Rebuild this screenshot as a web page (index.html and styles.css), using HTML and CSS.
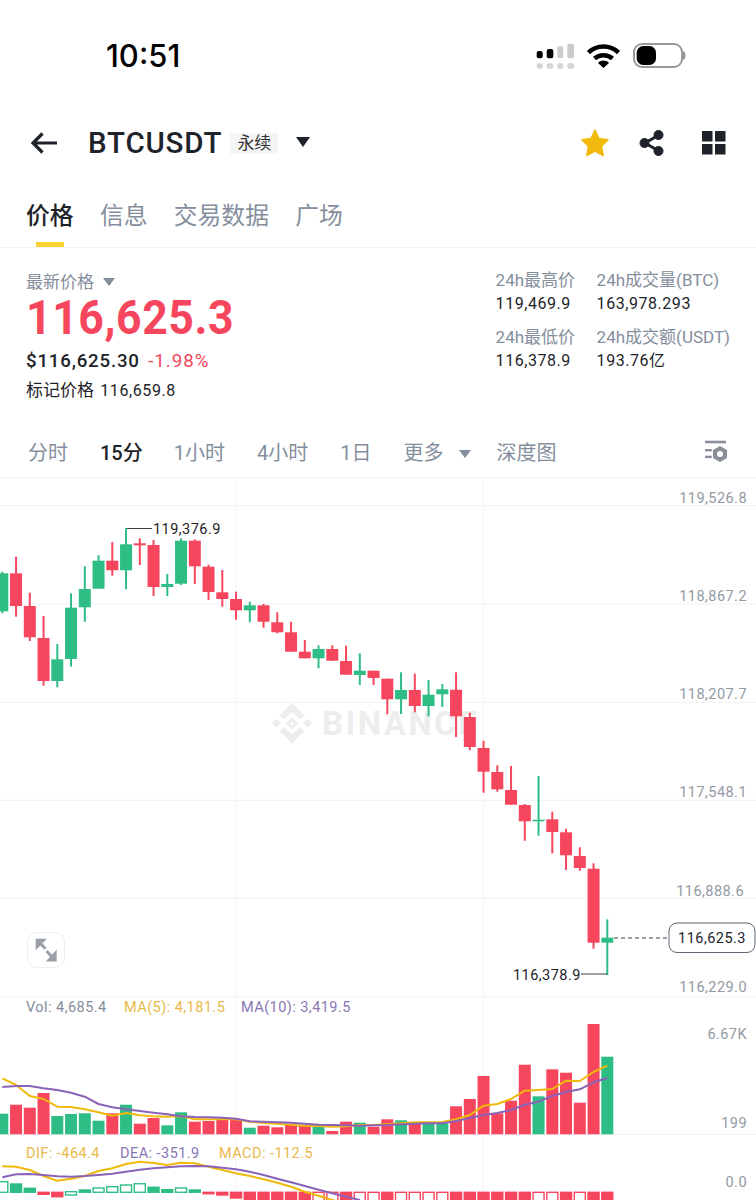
FILE: index.html
```html
<!DOCTYPE html>
<html lang="zh-CN">
<head>
    <meta charset="UTF-8">
    <meta name="viewport" content="width=device-width, initial-scale=1.0">
    <title>BTCUSDT 永续</title>
    <link rel="stylesheet" href="styles.css">
</head>
<body>
    <!-- Status bar -->
    <div class="status-bar">
        <span class="clock">10:51</span>
        <div class="status-icons">
            <svg width="38" height="26" viewBox="0 0 38 26">
                <rect x="0.700" y="8" width="6" height="7.300" rx="2" fill="#000"/>
                <rect x="10.700" y="6" width="6.600" height="9.300" rx="2" fill="#000"/>
                <rect x="21.300" y="3.300" width="6" height="12" rx="2" fill="#ccc"/>
                <rect x="31.300" y="0.700" width="6.700" height="14.600" rx="2" fill="#ccc"/>
                <rect x="0.700" y="20.300" width="6" height="5.400" rx="2" fill="#d4d4d4"/>
                <rect x="10.700" y="20.300" width="6.600" height="5.400" rx="2" fill="#d4d4d4"/>
                <rect x="21.300" y="20.300" width="6" height="5.400" rx="2" fill="#d4d4d4"/>
                <rect x="31.300" y="20.300" width="6.700" height="5.400" rx="2" fill="#d4d4d4"/>
            </svg>
            <svg width="33" height="24" viewBox="0 0 33 24" fill="none" stroke="#000" stroke-width="4.500">
                <path d="M1.500 8.500C10 0.500 23 0.500 31.500 8.500"/>
                <path d="M7.500 14.500C12.500 10 20.500 10 25.500 14.500"/>
                <path d="M11 19L16.500 24L22 19C19 15.800 14 15.800 11 19Z" fill="#000" stroke="none"/>
            </svg>
            <svg width="54" height="25" viewBox="0 0 54 25">
                <rect x="1" y="1" width="48" height="23" rx="8" fill="#fff" stroke="#999" stroke-width="2"/>
                <rect x="3.700" y="3" width="19.300" height="19" rx="6.500" fill="#000"/>
                <path d="M50 8C53.500 8.500 53.500 16.500 50 17Z" fill="#999"/>
            </svg>
        </div>
    </div>

    <!-- Title row -->
    <header class="title-bar">
        <svg class="back" width="28" height="24" viewBox="0 0 28 24" fill="none" stroke="#1e2329" stroke-width="3.200">
            <path d="M27 12H3M12.500 2.500L3 12L12.500 21.500"/>
        </svg>
        <h1 class="symbol">BTCUSDT</h1>
        <span class="tag">永续</span>
        <span class="caret caret-dark"></span>
        <div class="actions">
            <svg width="28" height="28" viewBox="0 0 28 28">
                <path d="M14 1L18 9.500L27 10.700L20.500 17.200L22.200 26.500L14 22L5.800 26.500L7.500 17.200L1 10.700L10 9.500Z" fill="#f0b90b" stroke="#f0b90b" stroke-linejoin="round" stroke-width="1.500"/>
            </svg>
            <svg class="share" width="28" height="28" viewBox="0 0 28 28" fill="#1e2329" stroke="#1e2329">
                <path d="M20 6.500L7 14L20 21.500" fill="none" stroke-width="3"/>
                <circle cx="20.500" cy="6" r="4.500"/>
                <circle cx="6.500" cy="14" r="4.500"/>
                <circle cx="20.500" cy="22" r="4.500"/>
            </svg>
            <svg width="24" height="24" viewBox="0 0 24 24" fill="#1e2329">
                <rect x="0" y="0" width="10.500" height="10.500"/>
                <rect x="13" y="0" width="10.500" height="10.500"/>
                <rect x="0" y="13" width="10.500" height="10.500"/>
                <rect x="13" y="13" width="10.500" height="10.500"/>
            </svg>
        </div>
    </header>

    <!-- Page tabs -->
    <nav class="tabs">
        <a class="tab active">价格</a>
        <a class="tab">信息</a>
        <a class="tab">交易数据</a>
        <a class="tab">广场</a>
    </nav>

    <!-- Price summary -->
    <section class="summary">
        <div class="price-block">
            <div class="price-label">最新价格 <span class="caret caret-grey"></span></div>
            <div class="last-price">116,625.3</div>
            <div class="fiat"><b>$116,625.30</b> <span class="change">-1.98%</span></div>
            <div class="mark">标记价格 <span>116,659.8</span></div>
        </div>
        <div class="stats">
            <div class="stat"><label>24h最高价</label><span>119,469.9</span></div>
            <div class="stat"><label>24h成交量(BTC)</label><span>163,978.293</span></div>
            <div class="stat"><label>24h最低价</label><span>116,378.9</span></div>
            <div class="stat"><label>24h成交额(USDT)</label><span>193.76亿</span></div>
        </div>
    </section>

    <!-- Interval row -->
    <div class="intervals">
        <a class="interval">分时</a>
        <a class="interval current">15分</a>
        <a class="interval">1小时</a>
        <a class="interval">4小时</a>
        <a class="interval">1日</a>
        <a class="interval more">更多 <span class="caret caret-grey"></span></a>
        <a class="interval">深度图</a>
        <svg class="chart-settings" width="24" height="24" viewBox="0 0 24 24" fill="#8a9099">
            <rect x="1" y="1.700" width="21" height="2.600"/>
            <rect x="1" y="10" width="6.700" height="2.400"/>
            <rect x="1" y="16.700" width="6.700" height="2.400"/>
            <path d="M16 7L23 11V19L16 23L9 19V11ZM16 12A3 3 0 1 0 16 18A3 3 0 1 0 16 12Z" fill-rule="evenodd"/>
        </svg>
    </div>

    <!-- Chart, drawn by chart.js -->
    <div class="chart">
        <svg id="chart" width="756" height="723" viewBox="0 477 756 723"></svg>
        <button class="expand">
            <svg width="24" height="24" viewBox="0 0 24 24" fill="#9aa0a8" stroke="#9aa0a8">
                <path d="M1.700 0.800H13L1.700 12.200Z" stroke="none"/>
                <path d="M6 5L11.500 10.800" stroke-width="3"/>
                <path d="M22.700 23.500H11.700L22.700 11.500Z" stroke="none"/>
                <path d="M18 19L12.500 13" stroke-width="3"/>
            </svg>
        </button>
    </div>

    <script src="chart.js"></script>
</body>
</html>
```

FILE: styles.css
```css
* {
    box-sizing: border-box;
}

body {
    margin: 0;
    width: 756px;
    height: 1200px;
    overflow: hidden;
    background: #fff;
    color: #1e2329;
    font-family: 'Roboto', 'Noto Sans CJK SC', sans-serif;
}

.status-bar {
    display: flex;
    justify-content: space-between;
    align-items: center;
    height: 111px;
    padding: 0 69px 0 106px;
}

.clock {
    font-family: 'Inter', sans-serif;
    font-size: 31px;
    font-weight: 500;
    color: #000;
}

.status-icons {
    display: flex;
    align-items: center;
    gap: 13px;
}

.title-bar {
    display: flex;
    align-items: center;
    height: 64px;
    padding: 0 30px 0 30px;
}

.symbol {
    margin: 0 0 0 30px;
    font-size: 29.500px;
    font-weight: 500;
    line-height: 64px;
    letter-spacing: 0.800px;
}

.tag {
    margin-left: 8px;
    width: 48px;
    height: 21px;
    line-height: 21px;
    text-align: center;
    background: #f5f5f5;
    font-size: 17px;
    color: #333;
}

.caret {
    display: inline-block;
    width: 0;
    height: 0;
    border-left: 6px solid transparent;
    border-right: 6px solid transparent;
}

.caret-dark {
    margin-left: 18px;
    margin-top: -3px;
    border-top: 10px solid #1e2329;
    border-left-width: 7px;
    border-right-width: 7px;
}

.caret-grey {
    margin-left: 5px;
    vertical-align: 2px;
    border-top: 8px solid #848e9c;
}

.actions {
    display: flex;
    align-items: center;
    gap: 33px;
    margin-left: auto;
}

.actions .share {
    margin: 0 3px 0 -4px;
}

.tabs {
    display: flex;
    gap: 26.300px;
    height: 73px;
    padding: 0 26px;
    border-bottom: 1px solid #f0f1f2;
}

.tab {
    position: relative;
    font-size: 23.800px;
    line-height: 32px;
    padding-top: 25px;
    color: #848e9c;
}

.tab.active {
    color: #1e2329;
    font-weight: 500;
}

.tab.active::after {
    content: '';
    position: absolute;
    left: 10px;
    right: 10px;
    bottom: 0;
    height: 5px;
    background: #fcd535;
}

.summary {
    display: flex;
    justify-content: space-between;
    height: 183px;
    padding: 24px 26px 0 26px;
}

.price-label {
    font-size: 17px;
    line-height: 20px;
    color: #848e9c;
}

.last-price {
    margin-top: 1px;
    font-size: 48.500px;
    font-weight: 700;
    line-height: 49px;
    letter-spacing: 0.600px;
    color: #f6465d;
    transform: scaleX(0.92);
    transform-origin: left;
}

.fiat {
    margin-top: 7px;
    font-size: 18.700px;
    line-height: 24px;
    letter-spacing: 0.800px;
}

.fiat b {
    font-weight: 500;
}

.change {
    margin-left: 3px;
    letter-spacing: 1px;
    color: #f6465d;
}

.mark {
    margin-top: 5px;
    font-size: 17px;
    line-height: 24px;
}

.mark span {
    margin-left: 2px;
    font-size: 16px;
    letter-spacing: 0.600px;
}

.stats {
    display: grid;
    grid-template-columns: 101px auto;
    align-content: start;
    row-gap: 9px;
    margin-top: -4px;
}

.stat label {
    display: block;
    font-size: 17px;
    line-height: 24px;
    color: #848e9c;
}

.stat span {
    display: block;
    font-size: 16px;
    line-height: 24px;
    letter-spacing: 0.550px;
}

.intervals {
    display: flex;
    align-items: center;
    height: 46px;
    padding: 0 28px 6px 28px;
}

.interval {
    margin-right: 32px;
    font-size: 20px;
    color: #848e9c;
}

.interval.current {
    margin-right: 31px;
    color: #1e2329;
    font-weight: 500;
}

.interval.more {
    margin-right: 25px;
}

.more .caret-grey {
    margin-left: 11px;
}

.chart-settings {
    margin-left: auto;
}

.chart {
    position: relative;
    height: 723px;
}

.chart svg {
    display: block;
}

.chart text {
    font-family: 'Roboto', sans-serif;
    font-size: 14.500px;
    letter-spacing: 0.450px;
}

.chart .axis {
    fill: #929aa5;
    text-anchor: end;
}

.chart .marker {
    fill: #1e2329;
}

.chart .watermark {
    font-size: 33px;
    font-weight: 700;
    fill: #eceded;
    letter-spacing: 2.500px;
}

.expand {
    position: absolute;
    left: 27px;
    top: 455px;
    display: flex;
    justify-content: center;
    align-items: center;
    width: 38px;
    height: 36px;
    padding: 0;
    background: #fff;
    border: 1.500px solid #eceef0;
    border-radius: 10px;
}
```

FILE: chart.js
```js
const SVG_NS = 'http://www.w3.org/2000/svg';
const chart = document.getElementById('chart');

const UP = '#2ebd85';
const DOWN = '#f6465d';
const GRID = '#f1f2f4';
const MA_YELLOW = '#f0b90b';
const MA_PURPLE = '#8a63b8';

// candle i sits at x = 2.3 + 13.75 * i
const colX = i => 2.3 + 13.75 * i;

// [up?, wick top, wick bottom, body top, body bottom] in page pixels
const candles = [
    [1, 571.7, 613.3, 573.3, 611.3], [0, 556.7, 616.7, 573.3, 606], [0, 592.7, 641, 606, 637.3],
    [0, 616, 685.7, 638, 681], [1, 644, 687.3, 659.3, 681], [1, 593.3, 666.7, 607.7, 659],
    [1, 566.3, 621.7, 589, 607.3], [1, 555.3, 588.7, 560.7, 588.7], [0, 542, 575.7, 560.7, 570.3],
    [1, 528.3, 589.3, 544.3, 570.3], [0, 538.3, 565, 543.3, 545.3], [0, 540, 596, 545, 587],
    [1, 574, 596, 584, 587], [1, 538.3, 585, 540.7, 583.7], [0, 539.3, 584, 540.7, 566.3],
    [0, 564.7, 600, 566.7, 592], [0, 570, 606.7, 592.3, 599], [0, 591.7, 619.7, 599, 610.3],
    [1, 601.7, 622.3, 605.3, 610.3], [0, 604, 627.7, 605.3, 621.7], [0, 612.3, 633.3, 622.3, 632.3],
    [0, 621.7, 651.7, 632.3, 651.7], [0, 640, 658.3, 651.7, 658.3], [1, 645.3, 668.3, 649, 658.3],
    [0, 645.3, 660.7, 649, 660.7], [0, 645.7, 674.7, 661, 674.7], [1, 653.3, 685, 670.7, 675],
    [0, 670.7, 685, 670.7, 678], [0, 678.7, 714.3, 678.7, 699.3], [1, 672.3, 714, 690, 699.3],
    [0, 673.7, 712.3, 690, 706], [1, 680, 716.3, 694.7, 706], [1, 684, 707, 689.3, 694.3],
    [0, 672.3, 737, 689.7, 716.3], [0, 712.7, 750, 717, 747], [0, 740.7, 792.7, 748, 771.7],
    [0, 765.3, 791.7, 772, 789.3], [0, 766, 804.7, 790, 804.7], [0, 804, 840.7, 805, 821.3],
    [1, 776, 835.7, 819.7, 821.3], [0, 811.7, 853.3, 819.3, 832], [0, 828.7, 870, 832.3, 855.3],
    [0, 847.3, 870.7, 856, 868], [0, 863.3, 948.7, 868.7, 942.7], [1, 919.3, 975, 937.7, 942.7],
];

// bar tops of the volume pane, y pixels
const volume = [
    1113.7, 1104.7, 1107.7, 1093, 1116, 1114, 1113.3, 1120.7, 1113.3, 1104.7, 1123.7, 1118,
    1125.3, 1112.3, 1121.7, 1121, 1120, 1119.3, 1127.7, 1125.7, 1127.3, 1125, 1126, 1127,
    1131, 1121.7, 1122.7, 1126.7, 1119.3, 1120.3, 1123.3, 1123.3, 1123.3, 1106.3, 1099,
    1076, 1113.3, 1100.7, 1064.7, 1096.3, 1069.3, 1072.7, 1102.7, 1024, 1056.7,
];
const volMa5 = [
    1078.3, 1085, 1096, 1099, 1106.7, 1107, 1109.3, 1112.3, 1115.7, 1113, 1115.3, 1116.3,
    1116.7, 1116, 1119.3, 1119.3, 1119.3, 1119.3, 1121.7, 1123, 1123.7, 1124.7, 1125.7, 1126,
    1126.7, 1126.3, 1125, 1125, 1124.3, 1123.3, 1122.3, 1122.3, 1122, 1119.3, 1115, 1105.7,
    1104, 1099, 1090.7, 1090, 1089, 1080.7, 1081, 1072, 1065.7,
];
const volMa10 = [
    1087, 1086, 1086, 1088.3, 1090, 1092.7, 1096.7, 1104, 1107.3, 1109.3, 1111, 1112.7,
    1114.3, 1116.3, 1117, 1117.3, 1117.7, 1118.7, 1121.3, 1121.7, 1122.3, 1122.7, 1123.7,
    1124.7, 1125, 1125.3, 1125.7, 1125.3, 1125, 1124.3, 1123.7, 1123.3, 1123.3, 1121, 1118,
    1115, 1113, 1110, 1104.7, 1101.7, 1096, 1092, 1089.3, 1082.3, 1078,
];

// [top, bottom, hollow?] of the MACD histogram bars
const macd = [
    [1181.7, 1192.3, 1], [1184, 1192.3, 0], [1188.3, 1192.3, 0], [1192.3, 1194.3, 0], [1192.3, 1196.7, 0],
    [1191.7, 1195, 1], [1190, 1192.3, 0], [1188, 1192.3, 1], [1186.7, 1192.3, 1], [1185, 1192.3, 1],
    [1183.7, 1192.3, 1], [1187.3, 1192.3, 0], [1189.7, 1192.3, 0], [1188, 1192.3, 1], [1190, 1192.3, 0],
    [1192.3, 1193.7, 0], [1192.3, 1195, 0], [1192.3, 1198, 0], [1192.3, 1201, 0], [1192.3, 1201, 0],
    [1192.3, 1201, 0], [1192.3, 1201, 0], [1192.3, 1201, 0], [1192.3, 1202, 1], [1192.3, 1202, 1],
    [1192.3, 1201, 0], [1192.3, 1202, 1], [1192.3, 1202, 1], [1192.3, 1201, 0], [1192.3, 1202, 1],
    [1192.3, 1202, 1], [1192.3, 1202, 1], [1192.3, 1202, 1], [1192.3, 1201, 0], [1192.3, 1201, 0],
    [1192.3, 1201, 0], [1192.3, 1201, 0], [1192.3, 1201, 0], [1192.3, 1201, 0], [1192.3, 1202, 1],
    [1192.3, 1202, 1], [1192.3, 1201, 0], [1192.3, 1202, 1], [1192.3, 1201, 0], [1192.3, 1201, 0],
];
const dif = [
    1166.3, 1166.7, 1170, 1176, 1180.7, 1178.7, 1176, 1171, 1168.3, 1164, 1161.7, 1163,
    1165, 1162.7, 1163.3, 1166.7, 1170, 1173.3, 1176, 1179.3, 1182.7, 1186.7, 1191.7,
    1195.7, 1200, 1204,
];
const dea = [
    1177.3, 1174.3, 1174, 1175, 1176.3, 1176.7, 1176, 1175, 1173.7, 1171.7, 1169.7, 1168.3,
    1167.3, 1166.3, 1166, 1166.3, 1167.7, 1169.3, 1171.7, 1175, 1178.7, 1182.3, 1186,
    1189.7, 1193.3, 1196.7, 1200,
];

function add(tag, attrs, text) {
    const el = document.createElementNS(SVG_NS, tag);
    for (const key in attrs) el.setAttribute(key, attrs[key]);
    if (text) el.textContent = text;
    chart.appendChild(el);
    return el;
}

function line(x1, y1, x2, y2, stroke, width = 1) {
    add('line', { x1, y1, x2, y2, stroke, 'stroke-width': width });
}

function maLine(values, stroke) {
    const points = values.map((y, i) => colX(i).toFixed(1) + ',' + y).join(' ');
    add('polyline', { points, fill: 'none', stroke, 'stroke-width': 2, 'stroke-linejoin': 'round' });
}

// grid
[477.5, 505.7, 604, 702.3, 800.3, 898.3, 996.7, 1134.5].forEach(y => line(0, y, 756, y, GRID));
[236, 483.5].forEach(x => line(x, 477, x, 1200, GRID));

// watermark
add('path', {
    transform: 'translate(272 703)',
    fill: '#eceded',
    'fill-rule': 'evenodd',
    d: 'M12.200 16.800L20 9L27.800 16.800L32.300 12.300L20 0L7.700 12.300Z'
     + 'M12.200 23.700L20 31.500L27.800 23.700L32.300 28.200L20 40.500L7.700 28.200Z'
     + 'M0 20.250L4.500 15.750L9 20.250L4.500 24.750Z'
     + 'M31 20.250L35.500 15.750L40 20.250L35.500 24.750Z'
     + 'M20 14L26.250 20.250L20 26.500L13.750 20.250ZM20 18.500L18.250 20.250L20 22L21.750 20.250Z',
});
add('text', { x: 322, y: 735, class: 'watermark' }, 'BINANCE');

// candles
candles.forEach(([up, wickTop, wickBottom, bodyTop, bodyBottom], i) => {
    const x = colX(i);
    const color = up ? UP : DOWN;
    line(x, wickTop, x, wickBottom, color, 2);
    add('rect', { x: x - 6, y: bodyTop, width: 12, height: bodyBottom - bodyTop, fill: color });
});

// price axis
[['119,526.8', 747, 503], ['118,867.2', 747, 601], ['118,207.7', 747, 699], ['117,548.1', 747, 797],
 ['116,888.6', 744, 896], ['116,229.0', 747, 992]].forEach(([label, x, y]) => {
    add('text', { x, y, class: 'axis' }, label);
});

// high / low markers
line(126, 528.5, 152, 528.5, '#3a4049');
line(126, 528, 126, 545, UP, 2);
add('text', { x: 153, y: 534, class: 'marker' }, '119,376.9');
line(581, 974, 607, 974, '#3a4049');
add('text', { x: 513, y: 980, class: 'marker' }, '116,378.9');

// last price tag
add('line', { x1: 614, y1: 938, x2: 668, y2: 938, stroke: '#3a4049', 'stroke-dasharray': '4 3' });
add('rect', { x: 669, y: 923, width: 86, height: 29.5, rx: 8, fill: '#fff', stroke: '#5e6673' });
add('text', { x: 712, y: 943, class: 'marker', 'text-anchor': 'middle' }, '116,625.3');

// volume pane
add('text', { x: 26, y: 1012, fill: '#848e9c' }, 'Vol: 4,685.4');
add('text', { x: 124, y: 1012, fill: '#e9b949' }, 'MA(5): 4,181.5');
add('text', { x: 241, y: 1012, fill: '#8a76b5' }, 'MA(10): 3,419.5');
volume.forEach((top, i) => {
    add('rect', { x: colX(i) - 6, y: top, width: 12, height: 1134.3 - top, fill: candles[i][0] ? UP : DOWN });
});
maLine(volMa5, MA_YELLOW);
maLine(volMa10, MA_PURPLE);
add('text', { x: 747, y: 1039, class: 'axis' }, '6.67K');
add('text', { x: 747, y: 1128, class: 'axis' }, '199');

// MACD pane
add('text', { x: 26, y: 1158, fill: '#e9b949' }, 'DIF: -464.4');
add('text', { x: 120, y: 1158, fill: '#8a76b5' }, 'DEA: -351.9');
add('text', { x: 219, y: 1158, fill: '#e9b949' }, 'MACD: -112.5');
macd.forEach(([top, bottom, hollow], i) => {
    const color = top < 1192 ? UP : DOWN;
    add('rect', {
        x: colX(i) - 5.5, y: top, width: 11, height: bottom - top,
        fill: hollow ? '#fff' : color, stroke: color, 'stroke-width': 1.4,
    });
});
maLine(dif, MA_YELLOW);
maLine(dea, MA_PURPLE);
add('text', { x: 747, y: 1187, class: 'axis' }, '0.0');
```
